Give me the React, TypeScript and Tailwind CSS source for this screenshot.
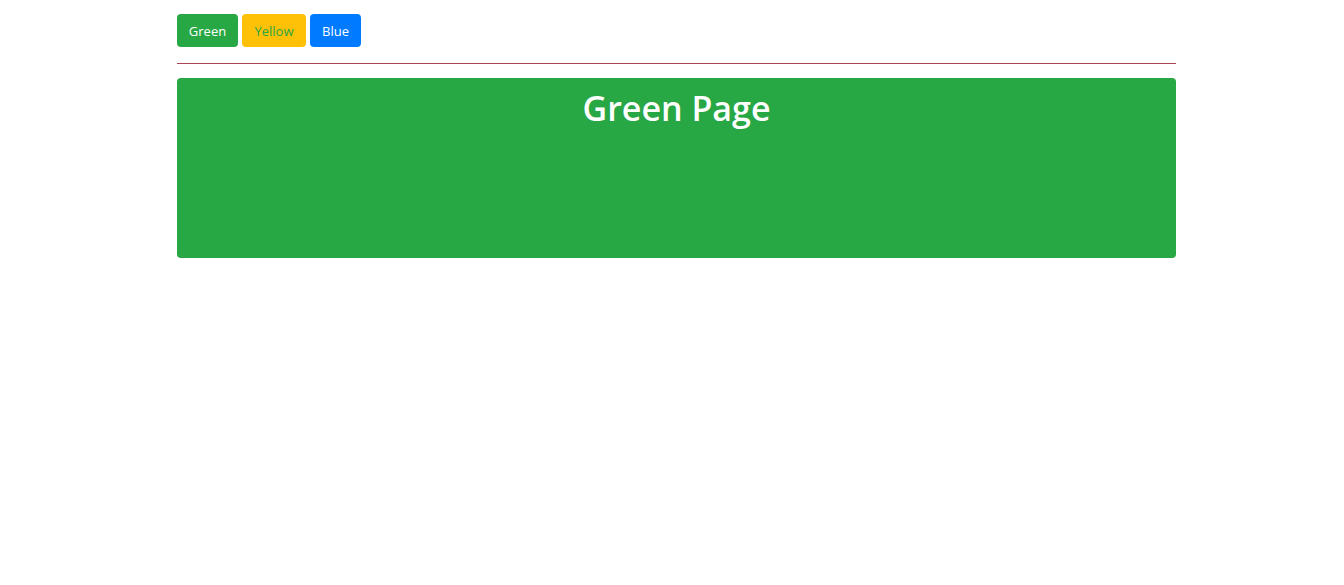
export default function App() {
  return (
    <div className="bg-white min-h-[585px] pt-[14px] pl-[177px]" style={{ fontFamily: '"Open Sans", "Noto Sans", sans-serif' }}>
      <div className="w-[999px]">
        <div className="flex gap-[4px]">
          <button className="h-[33px] w-[61px] pt-[3px] rounded-[4px] bg-[#28a745] text-white text-[13px]">Green</button>
          <button className="h-[33px] w-[64px] pt-[3px] rounded-[4px] bg-[#ffc107] text-[#28a745] text-[13px]">Yellow</button>
          <button className="h-[33px] w-[51px] pt-[3px] rounded-[4px] bg-[#007bff] text-white text-[13px]">Blue</button>
        </div>
        <div className="mt-[16px] h-px bg-[#a94452]" />
        <div className="mt-[14px] h-[180px] rounded-[4px] bg-[#28a745] pt-[8px] text-center">
          <h1 className="text-white text-[34px] font-semibold leading-[44px]">Green Page</h1>
        </div>
      </div>
    </div>
  );
}
